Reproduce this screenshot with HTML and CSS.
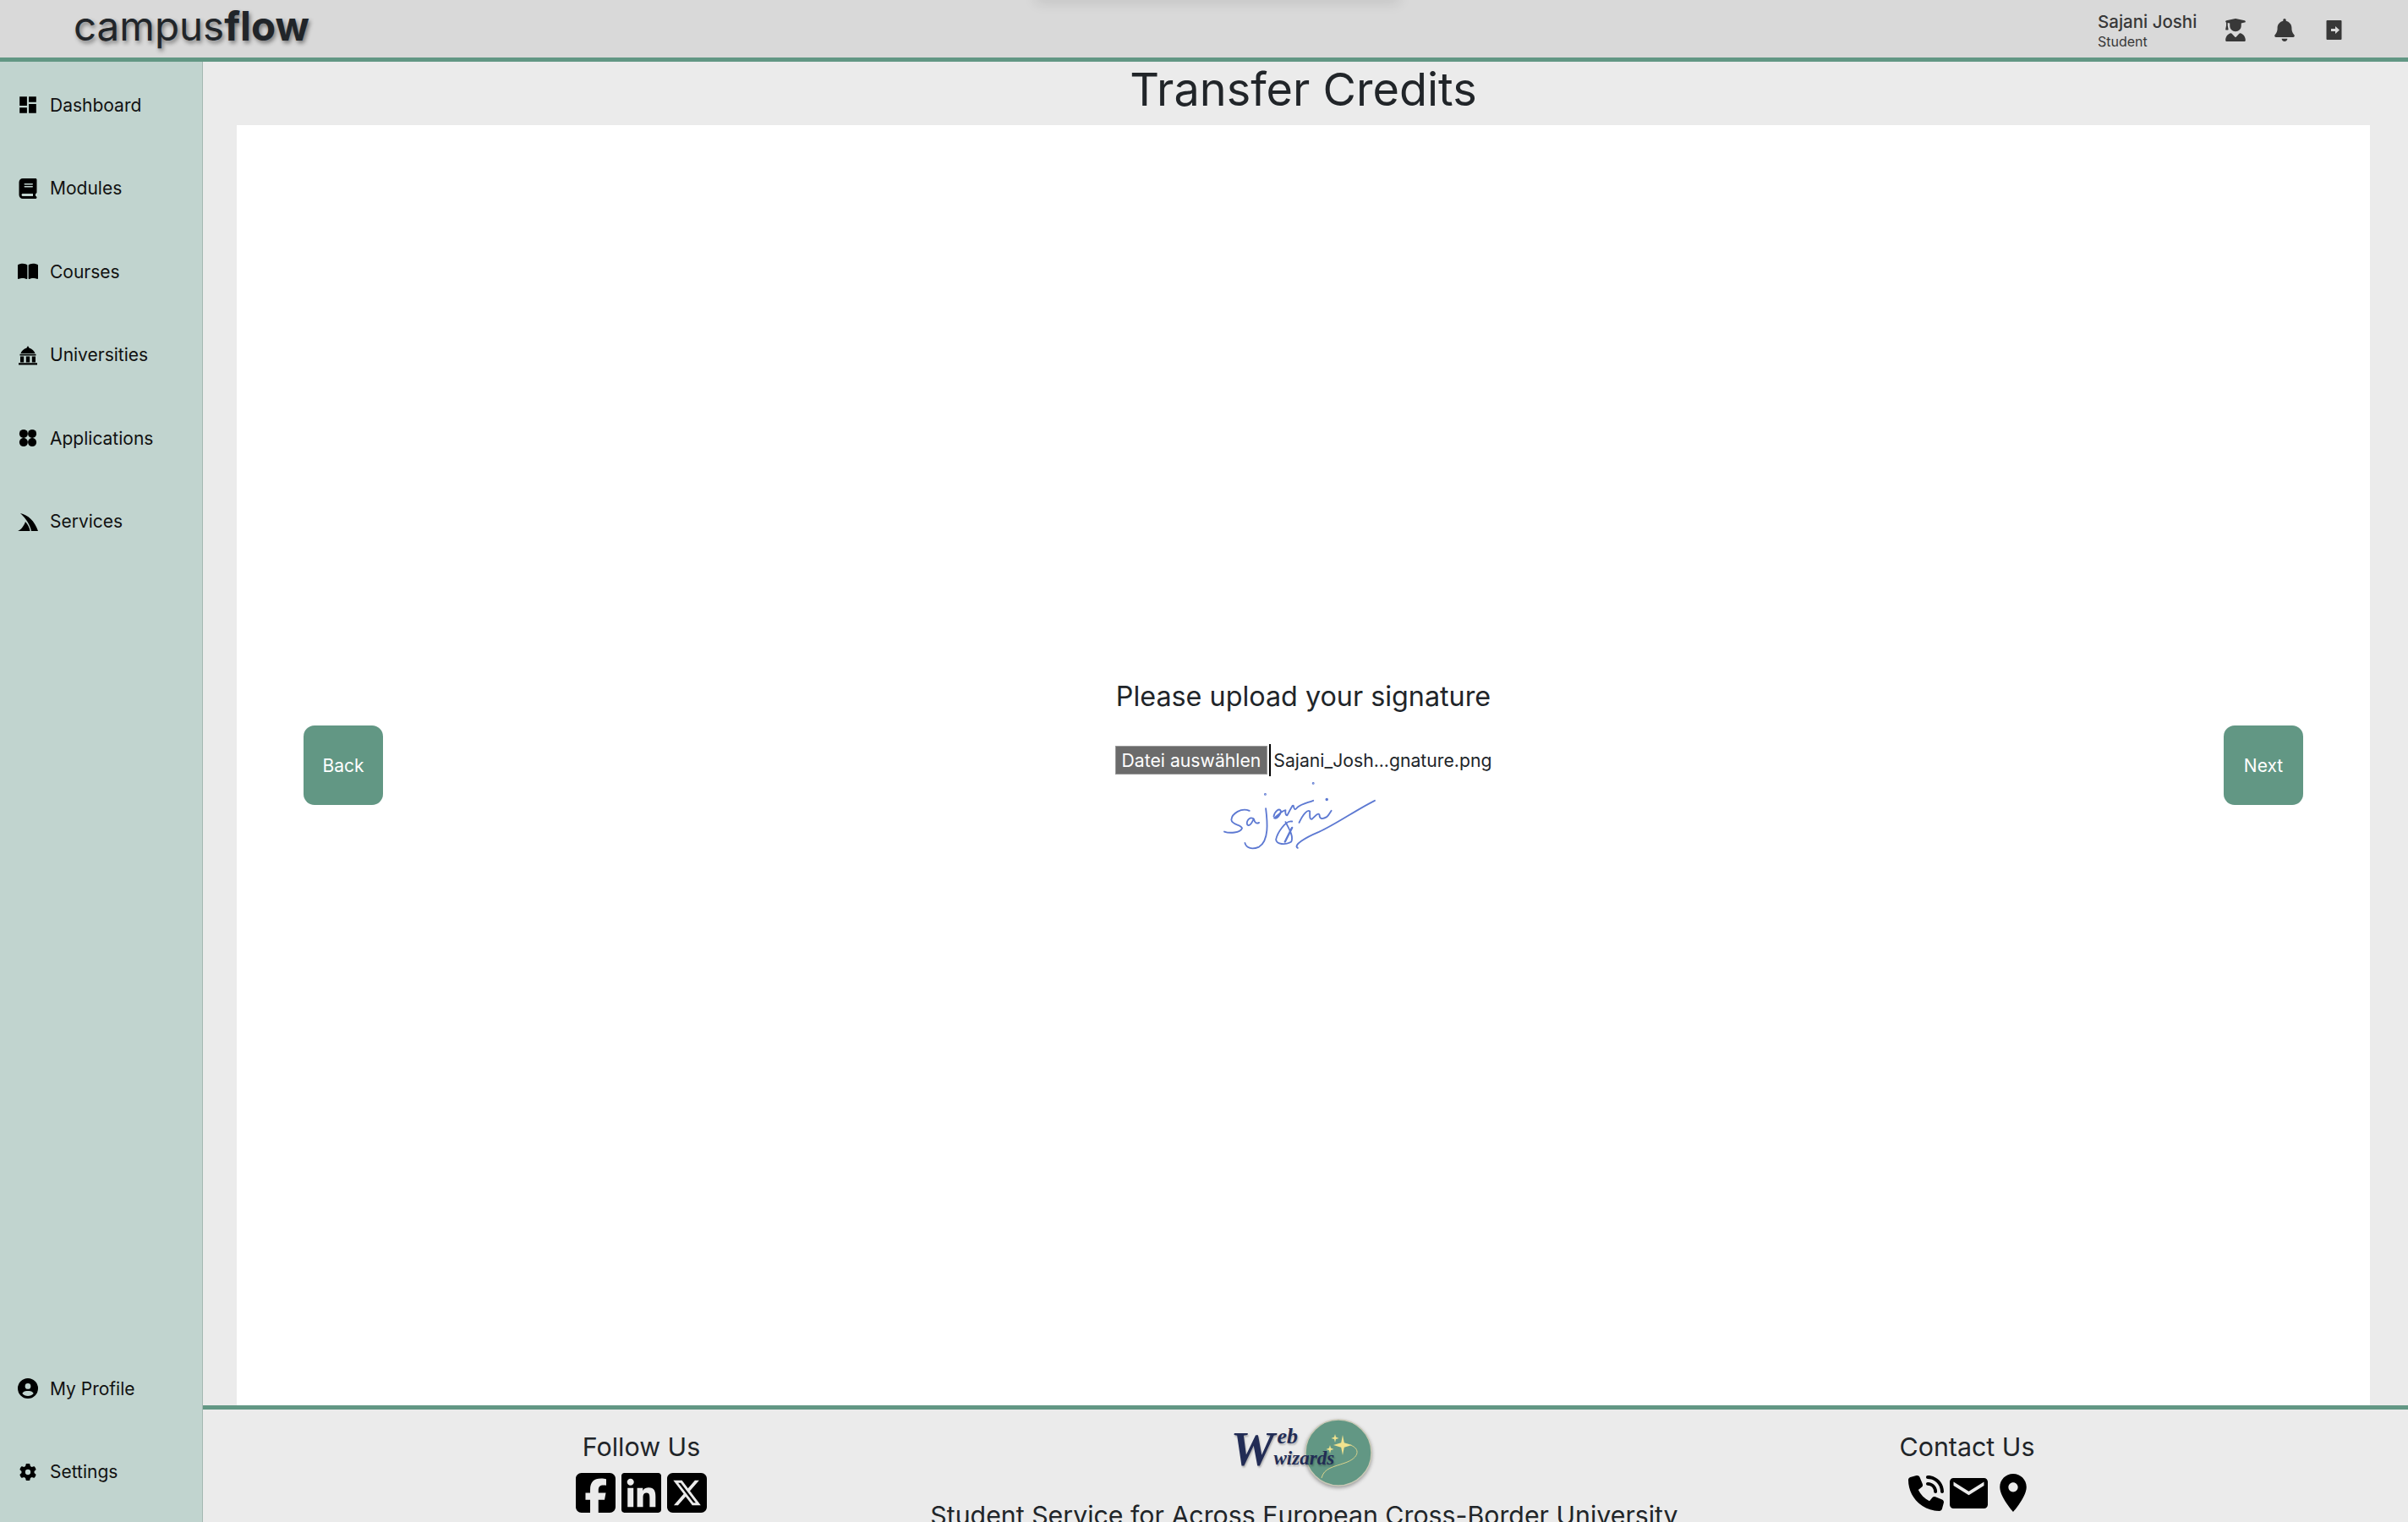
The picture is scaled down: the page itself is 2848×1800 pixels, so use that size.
FILE: index.html
```html
<!DOCTYPE html>
<html lang="en">
<head>
    <meta charset="UTF-8">
    <title>Transfer Credits - campusflow</title>
    <link rel="stylesheet" href="styles.css">
</head>
<body>
<header class="topbar">
    <div class="topbar-shadow"></div>
    <div class="brand">campus<b>flow</b></div>
    <div class="user-box">
        <div class="user-info">
            <div class="user-name">Sajani Joshi</div>
            <div class="user-role">Student</div>
        </div>
        <svg class="top-icon grad" viewBox="0 0 448 512"><path d="M219.3 .5c3.1-.6 6.3-.6 9.4 0l200 40C439.9 42.7 448 52.6 448 64s-8.1 21.3-19.3 23.5L352 102.9V160c0 70.7-57.3 128-128 128s-128-57.3-128-128V102.9L48 93.3v65.1l15.7 78.4c.9 4.7-.3 9.6-3.3 13.3s-7.6 5.9-12.4 5.9H16c-4.8 0-9.3-2.1-12.4-5.9s-4.3-8.6-3.3-13.3L16 158.4V86.6C6.5 83.3 0 74.3 0 64C0 52.6 8.1 42.7 19.3 40.5l200-40zM111.9 327.7c10.5-3.4 21.8 .4 29.4 8.5l71 75.5c6.3 6.7 17 6.7 23.3 0l71-75.5c7.6-8.1 18.9-11.9 29.4-8.5C401 348.6 448 409.4 448 481.3c0 17-13.8 30.7-30.7 30.7H30.7C13.8 512 0 498.2 0 481.3c0-71.9 47-132.7 111.9-153.6z"/></svg>
        <svg class="top-icon bell" viewBox="0 0 448 512"><path d="M224 0c-17.7 0-32 14.3-32 32V51.2C119 66 64 130.6 64 208v18.8c0 47-17.3 92.4-48.5 127.6l-7.4 8.3c-8.4 9.4-10.4 22.9-5.3 34.4S19.4 416 32 416H416c12.6 0 24-7.4 29.2-18.9s3.1-25-5.3-34.4l-7.4-8.3C401.3 319.2 384 273.9 384 226.8V208c0-77.4-55-142-128-156.8V32c0-17.7-14.3-32-32-32zm45.3 493.3c12-12 18.7-28.3 18.7-45.3H224 160c0 17 6.7 33.3 18.7 45.3s28.3 18.7 45.3 18.7s33.3-6.7 45.3-18.7z"/></svg>
        <svg class="top-icon logout" viewBox="0 0 18 23"><path fill-rule="evenodd" d="M1 0H17a1 1 0 0 1 1 1V22a1 1 0 0 1-1 1H1a1 1 0 0 1-1-1V1a1 1 0 0 1 1-1zM5.500 10V13H10.500V16L15.500 11.500 10.500 7V10z"/></svg>
    </div>
</header>

<div class="page">
    <aside class="sidebar">
        <nav class="nav-group">
            <a class="nav-item"><svg class="nav-icon" viewBox="1 1 22 22"><path d="M3 13h8V3H3v10zm0 8h8v-6H3v6zm10 0h8V11h-8v10zm0-18v6h8V3h-8z"/></svg>Dashboard</a>
            <a class="nav-item"><svg class="nav-icon" viewBox="0 0 448 512"><path d="M96 0C43 0 0 43 0 96V416c0 53 43 96 96 96H384h32c17.700 0 32-14.300 32-32s-14.300-32-32-32V384c17.700 0 32-14.300 32-32V32c0-17.700-14.300-32-32-32H384 96zm0 384H352v64H96c-17.700 0-32-14.300-32-32s14.300-32 32-32zm32-240c0-8.800 7.200-16 16-16H336c8.800 0 16 7.200 16 16s-7.200 16-16 16H144c-8.800 0-16-7.200-16-16zm16 48H336c8.800 0 16 7.200 16 16s-7.200 16-16 16H144c-8.800 0-16-7.200-16-16s7.200-16 16-16z"/></svg>Modules</a>
            <a class="nav-item"><svg class="nav-icon" viewBox="0 0 576 576"><path transform="translate(0 32)" d="M249.600 471.500c10.800 3.800 22.400-4.100 22.400-15.500V78.600c0-4.200-1.600-8.400-5-11C247.400 52 202.400 32 144 32C93.500 32 46.300 45.300 18.100 56.100C6.800 60.500 0 71.700 0 83.800V454.100c0 11.900 12.800 20.200 24.100 16.500C55.600 460.100 105.500 448 144 448c33.900 0 79 14 105.600 23.500zm76.800 0C353 462 398.100 448 432 448c38.500 0 88.400 12.100 119.900 22.600c11.300 3.800 24.100-4.600 24.100-16.500V83.800c0-12.100-6.800-23.300-18.100-27.600C529.700 45.300 482.500 32 432 32c-58.400 0-103.400 20-123 35.600c-3.300 2.600-5 6.800-5 11V456c0 11.400 11.700 19.300 22.400 15.500z"/></svg>Courses</a>
            <a class="nav-item"><svg class="nav-icon" viewBox="0 0 24 24"><path d="M12 1l1.500 2.600C16.800 4.500 19.500 7 20.500 10H3.500C4.500 7 7.200 4.500 10.500 3.600zM2.500 10.800H21.500V12.600H2.500zM3 13.400H7.200V20.500H3zM9.800 13.400H14.200V20.500H9.800zM16.800 13.400H21V20.500H16.800zM1 21.200H23V23.500H1z"/></svg>Universities</a>
            <a class="nav-item"><svg class="nav-icon" viewBox="0 0 24 24"><circle cx="6.900" cy="6.900" r="5"/><circle cx="17.100" cy="6.900" r="5"/><circle cx="6.900" cy="17.100" r="5"/><circle cx="17.100" cy="17.100" r="5"/></svg>Applications</a>
            <a class="nav-item"><svg class="nav-icon" viewBox="0 0 24 24"><path d="M3 2C12 4 20 11 24 23H16C15 17 10 8 3 2zM9 12C12 15 14 19 14.500 23H0C3 22 7 18 9 12z"/></svg>Services</a>
        </nav>
        <nav class="nav-group">
            <a class="nav-item"><svg class="nav-icon" viewBox="0 0 512 512"><path d="M399 384.200C376.900 345.800 335.400 320 288 320H224c-47.400 0-88.900 25.800-111 64.200c35.200 39.200 86.200 63.800 143 63.800s107.800-24.700 143-63.800zM0 256a256 256 0 1 1 512 0A256 256 0 1 1 0 256zm256 16a72 72 0 1 0 0-144 72 72 0 1 0 0 144z"/></svg>My Profile</a>
            <a class="nav-item"><svg class="nav-icon" viewBox="-48 -48 608 608"><path d="M495.900 166.600c3.200 8.700 .5 18.400-6.400 24.600l-43.300 39.400c1.100 8.300 1.700 16.800 1.700 25.400s-.6 17.100-1.700 25.400l43.300 39.400c6.900 6.200 9.600 15.900 6.400 24.600c-4.400 11.900-9.700 23.300-15.800 34.300l-4.700 8.100c-6.600 11-14 21.400-22.100 31.200c-5.900 7.200-15.700 9.600-24.500 6.800l-55.700-17.700c-13.400 10.300-28.200 18.900-44 25.400l-12.500 57.100c-2 9.100-9 16.300-18.200 17.800c-13.800 2.300-28 3.500-42.500 3.500s-28.700-1.200-42.500-3.500c-9.200-1.500-16.200-8.700-18.200-17.800l-12.500-57.100c-15.800-6.500-30.600-15.100-44-25.400L83.100 425.900c-8.800 2.800-18.600 .3-24.500-6.800c-8.100-9.800-15.500-20.200-22.100-31.200l-4.700-8.100c-6.100-11-11.400-22.400-15.800-34.300c-3.200-8.700-.5-18.400 6.400-24.600l43.300-39.400C64.600 273.100 64 264.600 64 256s.6-17.100 1.700-25.400L22.400 191.200c-6.900-6.200-9.600-15.900-6.400-24.600c4.400-11.900 9.700-23.300 15.800-34.300l4.700-8.100c6.600-11 14-21.400 22.100-31.200c5.900-7.200 15.700-9.600 24.500-6.800l55.700 17.700c13.400-10.300 28.200-18.900 44-25.400l12.500-57.100c2-9.100 9-16.300 18.200-17.800C227.300 1.200 241.500 0 256 0s28.700 1.200 42.500 3.500c9.200 1.500 16.200 8.700 18.200 17.800l12.500 57.100c15.800 6.500 30.600 15.100 44 25.400l55.700-17.700c8.800-2.800 18.600-.3 24.500 6.800c8.100 9.800 15.500 20.200 22.100 31.200l4.700 8.100c6.100 11 11.400 22.400 15.800 34.300zM256 336a80 80 0 1 0 0-160 80 80 0 1 0 0 160z"/></svg>Settings</a>
        </nav>
    </aside>

    <main class="content">
        <h1 class="page-title">Transfer Credits</h1>
        <section class="card">
            <button class="step-btn">Back</button>
            <div class="upload">
                <h2 class="upload-title">Please upload your signature</h2>
                <div class="file-row">
                    <span class="file-btn">Datei auswählen</span>
                    <span class="caret"></span>
                    <span class="file-name">Sajani_Josh...gnature.png</span>
                </div>
                <!-- signature picture -->
                <svg class="signature" viewBox="490 420 560 260" fill="none" stroke="#5d79d2" stroke-width="5.500" stroke-linecap="round" stroke-linejoin="round">
                    <path d="M594 530C565 518 532 540 530 562C532 582 566 578 568 592C562 610 522 610 505 604"/>
                    <path d="M608 558C590 548 578 578 590 582C602 582 604 564 610 560C612 570 618 578 628 572"/>
                    <path d="M652 522C658 570 664 636 628 658C600 670 582 660 578 644"/>
                    <path d="M680 550C684 530 700 520 705 530C706 545 690 560 682 556C692 548 712 528 722 528C720 540 724 548 728 546C738 528 746 508 750 512C752 525 756 530 764 518C780 505 800 502 820 494"/>
                    <path d="M745 568C722 562 692 610 688 632C690 650 722 652 742 640C752 620 732 590 722 570"/>
                    <path d="M720 640C730 620 740 600 745 590" stroke-width="7"/>
                    <path d="M770 572C785 540 800 525 808 532C808 548 806 560 815 560C828 548 838 535 842 545C842 558 850 562 868 552C876 545 880 535 884 530"/>
                    <path d="M765 662C748 652 790 626 840 605C900 578 980 522 1038 494"/>
                    <circle cx="820" cy="433" r="1.500"/>
                    <circle cx="650" cy="472" r="1.500"/>
                    <circle cx="868" cy="490" r="2.500"/>
                </svg>
            </div>
            <button class="step-btn">Next</button>
        </section>
        <footer class="footer">
            <div class="footer-col">
                <div class="footer-title">Follow Us</div>
                <div class="footer-icons">
                    <svg class="social" viewBox="0 32 448 448"><path d="M64 32C28.700 32 0 60.700 0 96V416c0 35.300 28.700 64 64 64h98.200V334.200H109.400V256h52.800V222.300c0-87.100 39.400-127.500 125-127.500c16.200 0 44.200 3.200 55.700 6.400V172c-6-.6-16.500-1-29.600-1c-42 0-58.200 15.900-58.200 57.200V256h83.600l-14.400 78.200H255V480H384c35.300 0 64-28.700 64-64V96c0-35.300-28.700-64-64-64H64z"/></svg>
                    <svg class="social" viewBox="0 32 448 448"><path d="M416 32H31.900C14.300 32 0 46.500 0 64.300v383.400C0 465.500 14.300 480 31.900 480H416c17.600 0 32-14.500 32-32.300V64.300c0-17.800-14.400-32.300-32-32.300zM135.400 416H69V202.200h66.500V416zm-33.200-243c-21.300 0-38.500-17.300-38.500-38.500S80.900 96 102.200 96c21.200 0 38.500 17.300 38.500 38.500 0 21.300-17.200 38.500-38.500 38.500zm282.100 243h-66.400V312c0-24.800-.5-56.700-34.500-56.700-34.600 0-39.900 27-39.900 54.900V416h-66.400V202.200h63.700v29.200h.9c8.900-16.800 30.600-34.500 62.900-34.500 67.200 0 79.700 44.300 79.700 101.900V416z"/></svg>
                    <svg class="social" viewBox="0 32 448 448"><path d="M64 32C28.700 32 0 60.700 0 96V416c0 35.300 28.700 64 64 64H384c35.300 0 64-28.700 64-64V96c0-35.300-28.700-64-64-64H64zm297.100 84L257.300 234.600 379.400 396H283.800L209 298.100 123.300 396H75.800l111-126.900L69.700 116h98l67.700 89.500L313.600 116h47.500zM323.300 367.600L153.400 142.900H125.100L296.900 367.600h26.300z"/></svg>
                </div>
            </div>
            <div class="footer-col footer-mid">
                <div class="logo">
                    <svg class="logo-disc" viewBox="0 0 80 80">
                        <circle cx="40" cy="40" r="39" fill="#629784" stroke="#c9c9b6" stroke-width="1.500"/>
                        <path d="M45 19l1.800 9.200L56 31l-9.200 2.800L45 43l-1.800-9.200L34 31l9.200-2.800zM36 18l1 3.500L40.500 23 37 24l-1 4-1-4-3.500-1 3.500-1.500zM30 31l1 3.500 3.500 1.500-3.500 1-1 4-1-4-3.500-1 3.500-1.500z" fill="#f0e28e"/>
                        <path d="M54 31C66 35 65 46 48 52C34 57 23 58 20 70" fill="none" stroke="#d9d28c" stroke-width="1"/>
                    </svg>
                    <div class="logo-text">
                        <span class="logo-w">W</span>
                        <span class="logo-eb">eb</span>
                        <span class="logo-wizards">wizards</span>
                    </div>
                </div>
                <div class="footer-text">Student Service for Across European Cross-Border University</div>
            </div>
            <div class="footer-col">
                <div class="footer-title">Contact Us</div>
                <div class="footer-icons contact-icons">
                    <svg class="contact phone" viewBox="0 0 512 512"><path d="M280 0C408.100 0 512 103.900 512 232c0 13.300-10.700 24-24 24s-24-10.700-24-24c0-101.600-82.400-184-184-184c-13.300 0-24-10.700-24-24s10.700-24 24-24zm-24 120c0-13.300 10.700-24 24-24c75.100 0 136 60.900 136 136c0 13.300-10.700 24-24 24s-24-10.700-24-24c0-48.600-39.400-88-88-88c-13.300 0-24-10.700-24-24zM117.500 1.400c19.400-5.300 39.700 4.600 47.400 23.200l40 96c6.800 16.300 2.100 35.200-11.600 46.300L144 207.300c33.300 70.400 90.300 127.400 160.700 160.700L345 318.700c11.200-13.700 30-18.400 46.300-11.600l96 40c18.600 7.700 28.500 28 23.200 47.400l-24 88C481.800 499.900 466 512 448 512C200.600 512 0 311.400 0 64C0 46 12.100 30.200 29.500 25.400l88-24z"/></svg>
                    <svg class="contact mail" viewBox="2 4 20 16"><path d="M20 4H4c-1.100 0-1.990.9-1.990 2L2 18c0 1.100.9 2 2 2h16c1.100 0 2-.9 2-2V6c0-1.100-.9-2-2-2zm0 4l-8 5-8-5V6l8 5 8-5v2z"/></svg>
                    <svg class="contact pin" viewBox="5 2 14 20"><path d="M12 2C8.130 2 5 5.130 5 9c0 5.250 7 13 7 13s7-7.750 7-13c0-3.870-3.130-7-7-7zm0 9.500c-1.380 0-2.500-1.120-2.500-2.500s1.120-2.500 2.500-2.500 2.500 1.120 2.500 2.500-1.120 2.500-2.500 2.500z"/></svg>
                </div>
            </div>
        </footer>
    </main>
</div>
</body>
</html>
```

FILE: styles.css
```css
* {
    margin: 0;
    padding: 0;
    box-sizing: border-box;
}

body {
    font-family: "Inter", "Liberation Sans", sans-serif;
    color: #212529;
    background: #ebebeb;
    height: 100vh;
    overflow: hidden;
    display: flex;
    flex-direction: column;
}

/* Top bar */
.topbar {
    position: relative;
    flex: none;
    height: 73px;
    border-bottom: 5px solid #629784;
    background: #d9d9d9;
    display: flex;
    align-items: center;
    justify-content: space-between;
    padding: 0 78px 0 87px;
}

.topbar-shadow {
    position: absolute;
    top: -10px;
    left: 1225px;
    width: 430px;
    height: 10px;
    box-shadow: 0 2px 16px rgba(0, 0, 0, 0.14);
}

.brand {
    font-size: 47.5px;
    line-height: 60px;
    margin-top: -7px;
    text-shadow: 2px 3px 5px rgba(0, 0, 0, 0.45);
}

.brand b {
    font-weight: 700;
}

.user-box {
    display: flex;
    align-items: center;
    color: #383838;
}

.user-info {
    width: 151px;
    margin-top: 3px;
}

.user-name {
    font-size: 20.5px;
    font-weight: 500;
    line-height: 26px;
}

.user-role {
    font-size: 16px;
    line-height: 20px;
}

.top-icon {
    fill: #383838;
    display: block;
    margin-top: 3px;
}

.grad {
    width: 24px;
    height: 27px;
    margin-right: 34px;
}

.bell {
    width: 24px;
    height: 27px;
    margin-right: 37px;
}

.logout {
    width: 19px;
    height: 23px;
}

/* Page */
.page {
    flex: 1;
    min-height: 0;
    display: flex;
}

.sidebar {
    flex: none;
    width: 240px;
    background: #c1d4cf;
    border-right: 1px solid #a3b8b2;
    padding: 2px 0 10px;
    display: flex;
    flex-direction: column;
    justify-content: space-between;
}

.nav-item {
    height: 98.5px;
    display: flex;
    align-items: center;
    font-size: 21px;
    color: #111;
    position: relative;
    padding-left: 59px;
}

.nav-icon {
    position: absolute;
    left: 21px;
    width: 24px;
    height: 24px;
    fill: #000;
}

.content {
    flex: 1;
    min-width: 0;
    display: flex;
    flex-direction: column;
}

.page-title {
    flex: none;
    height: 75px;
    line-height: 65px;
    padding: 0 45px 0 40px;
    font-size: 54px;
    font-weight: 400;
    text-align: center;
}

.card {
    flex: 1;
    margin: 0 45px 0 40px;
    background: #fff;
    display: flex;
    align-items: center;
    justify-content: space-between;
    padding: 0 79px;
}

.step-btn {
    width: 94px;
    height: 94px;
    border: none;
    border-radius: 13px;
    background: #629784;
    color: #fff;
    font-family: inherit;
    font-size: 21px;
}

.upload {
    display: flex;
    flex-direction: column;
    align-items: center;
}

.upload-title {
    font-size: 32.3px;
    font-weight: 400;
    line-height: 40px;
    margin-bottom: 36px;
    margin-top: 2px;
}

.file-row {
    display: flex;
    align-items: center;
    height: 38px;
    font-size: 21.2px;
}

.file-btn {
    height: 34px;
    line-height: 32px;
    padding: 0 7px;
    background: #6b6b6b;
    border: 1px solid #999;
    color: #fff;
    margin-right: 2px;
}

.caret {
    width: 2px;
    height: 38px;
    background: #000;
    margin-right: 3px;
}

.signature {
    width: 187px;
    height: 87px;
    margin: 4px 10px 0 0;
}

/* Footer */
.footer {
    flex: none;
    height: 138px;
    overflow: hidden;
    border-top: 5px solid #629784;
    display: grid;
    grid-template-columns: repeat(3, 784px);
    justify-content: center;
    padding-right: 3px;
}

.footer-col {
    display: flex;
    flex-direction: column;
    align-items: center;
}

.footer-title {
    font-size: 30.4px;
    line-height: 40px;
    margin-top: 24px;
    margin-bottom: 11px;
}

.footer-icons {
    display: flex;
    gap: 7px;
}

.social {
    width: 47px;
    height: 47px;
    display: block;
}

.contact-icons {
    align-items: center;
    height: 47px;
    gap: 7px;
}

.phone {
    width: 42px;
    height: 42px;
}

.mail {
    width: 45px;
    height: 36px;
}

.pin {
    width: 32px;
    height: 45px;
    margin-left: 7px;
}

.logo {
    position: relative;
    width: 160px;
    height: 85px;
    margin-top: 11px;
}

.logo-disc {
    position: absolute;
    right: 0;
    top: 0;
    width: 80px;
    height: 80px;
    filter: drop-shadow(0 2px 2px rgba(0, 0, 0, 0.35));
}

.logo-text {
    position: absolute;
    left: 0;
    top: 0;
    width: 120px;
    height: 70px;
    color: #222c55;
    font-family: "Liberation Serif", serif;
    font-style: italic;
    font-weight: 700;
    text-shadow: 1px 2px 2px rgba(0, 0, 0, 0.25);
}

.logo-w {
    position: absolute;
    left: -7px;
    top: 8px;
    font-size: 58px;
    line-height: 56px;
}

.logo-eb {
    position: absolute;
    left: 48px;
    top: 8px;
    font-size: 26px;
    line-height: 26px;
}

.logo-wizards {
    position: absolute;
    left: 44px;
    top: 34px;
    font-size: 23px;
    line-height: 26px;
}

.footer-text {
    font-size: 30.3px;
    line-height: 40px;
    white-space: nowrap;
    margin-top: 9px;
}
```
